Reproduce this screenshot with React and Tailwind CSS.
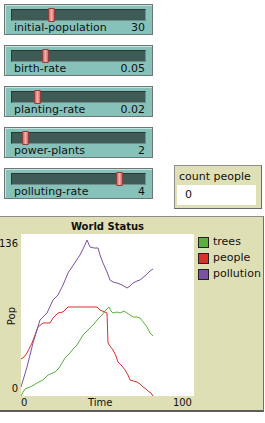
const sliders = [
  { name: "initial-population", value: "30", thumb: "left-[36px]" },
  { name: "birth-rate", value: "0.05", thumb: "left-[30px]" },
  { name: "planting-rate", value: "0.02", thumb: "left-[22px]" },
  { name: "power-plants", value: "2", thumb: "left-[10px]" },
  { name: "polluting-rate", value: "4", thumb: "left-[104px]" },
];

const purple = "0,153 6,133 12,109 19,86 26,79 32,66 37,61 42,51 47,39 53,30 59,21 63,13 66,6 69,13 73,14 77,14 79,21 82,29 86,38 89,46 92,48 96,49 101,51 106,54 109,52 112,49 116,47 119,46 125,41 129,37 132,35";
const red = "0,125 3,123 6,119 9,113 11,109 14,101 17,93 22,89 29,89 32,84 37,79 42,78 44,76 47,73 76,73 79,76 86,79 87,109 89,112 92,116 95,122 97,128 101,132 104,136 107,141 109,146 116,148 119,150 122,153 125,155 127,157 130,159 132,162";
const green = "0,162 2,158 4,155 9,153 13,151 16,149 22,146 25,143 27,141 34,138 38,134 41,129 44,124 49,119 52,115 56,111 59,106 62,101 66,97 69,94 73,90 76,86 81,81 84,77 86,75 88,73 90,77 92,79 96,78 99,79 103,77 106,79 109,81 112,83 116,83 119,84 123,89 126,93 129,99 132,102";

function Slider({ name, value, thumb }) {
  return (
    <div className="w-[149px] h-[31px] bg-[#86c2ba] border border-[#6f7776] shadow-[inset_1px_1px_0_#c4e6e0]">
      <div className="relative mx-[6px] mt-[4px] h-[12px] bg-[#3f5b56] border border-t-[#273835] border-l-[#273835] border-b-[#6e8f89] border-r-[#6e8f89]">
        <div className={`absolute top-[-2px] ${thumb} w-[7px] h-[14px] rounded-[1px] border border-[#8e3e3b] bg-gradient-to-r from-[#cc6a66] via-[#f4b0ac] to-[#cc6a66]`} />
      </div>
      <div className="flex justify-between mt-[1px] pl-[9px] pr-[7px] h-[12px] leading-[12px] text-[11px] text-[#111]">
        <span>{name}</span>
        <span>{value}</span>
      </div>
    </div>
  );
}

function LegendItem({ color, label }) {
  return (
    <div className="flex items-center h-[16px] gap-[4px]">
      <div className={`w-[11px] h-[11px] border border-[#222] ${color}`} />
      <span className="text-[11px] leading-[14px] text-[#111]">{label}</span>
    </div>
  );
}

export default function App() {
  return (
    <div className="w-[265px] h-[423px] bg-white overflow-hidden" style={{ fontFamily: '"DejaVu Sans", sans-serif' }}>
      <div className="flex">
        <div className="flex flex-col gap-[10px] pl-[4px] pt-[4px]">
          {sliders.map((s) => (
            <Slider key={s.name} {...s} />
          ))}
        </div>
        <div className="ml-[21px] mt-[165px] w-[88px] h-[44px] bg-[#e0e0b7] border border-[#8e8e8e] border-b-[#6a6a6a] border-r-[#6a6a6a]">
          <div className="pl-[4px] pt-[4px] text-[11px] leading-[14px] text-[#111]">count people</div>
          <div className="ml-[2px] mt-[1px] w-[79px] h-[20px] bg-white pl-[8px] text-[11px] leading-[20px] text-[#111]">0</div>
        </div>
      </div>
      <div className="mt-[7px] w-[264px] h-[196px] bg-[#dfdfb6] border-t border-t-[#8c8c8c] border-r border-r-[#707070] border-b-2 border-b-[#5d5d5d] grid grid-cols-[21px_173px_1fr] grid-rows-[17px_162px_14px]">
        <div />
        <div className="pt-[3px] text-center text-[10px] leading-[14px] font-bold text-[#111]">World Status</div>
        <div />
        <div className="flex flex-col items-end justify-between pr-[3px] pt-[3px] text-[10px] text-[#111]">
          <span className="leading-[14px]">136</span>
          <span className="leading-[12px] [writing-mode:vertical-rl] rotate-180">Pop</span>
          <span className="leading-[14px]">0</span>
        </div>
        <div className="bg-white">
          <svg width="173" height="162" viewBox="0 0 173 162" className="block">
            <polyline points={green} fill="none" stroke="#59b03c" strokeWidth="1" />
            <polyline points={red} fill="none" stroke="#d73229" strokeWidth="1" />
            <polyline points={purple} fill="none" stroke="#7c50a4" strokeWidth="1" />
          </svg>
        </div>
        <div className="pl-[4px] flex flex-col">
          <LegendItem color="bg-[#59b03c]" label="trees" />
          <LegendItem color="bg-[#d73229]" label="people" />
          <LegendItem color="bg-[#7c50a4]" label="pollution" />
        </div>
        <div />
        <div className="flex justify-between pr-[2px] text-[10px] leading-[14px] text-[#111]">
          <span>0</span>
          <span>Time</span>
          <span>100</span>
        </div>
        <div />
      </div>
    </div>
  );
}
